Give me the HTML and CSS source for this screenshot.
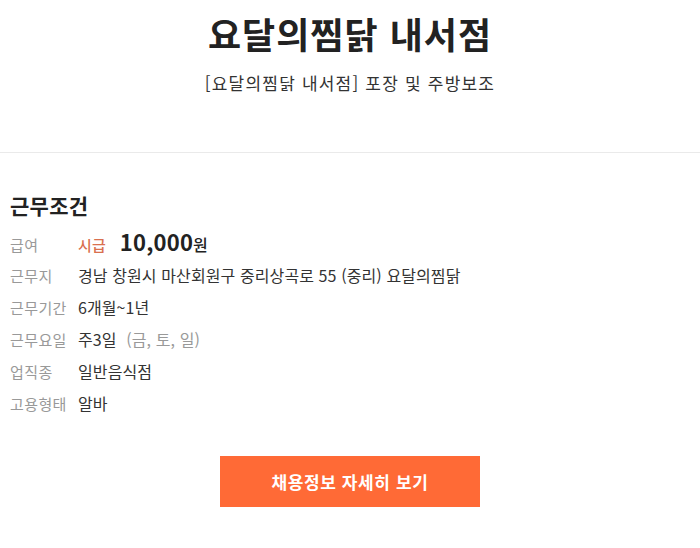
FILE: index.html
```html
<!DOCTYPE html>
<html lang="ko">
<head>
<meta charset="utf-8">
<link rel="stylesheet" href="styles.css">
</head>
<body>
<header class="head">
  <h1 class="title">요달의찜닭 내서점</h1>
  <p class="sub">[요달의찜닭 내서점] 포장 및 주방보조</p>
</header>
<section class="cond">
  <h2 class="cond-title">근무조건</h2>
  <dl class="rows">
    <div class="row row-pay"><dt>급여</dt><dd><span class="pay-type">시급</span><strong class="pay">10,000</strong><span class="won">원</span></dd></div>
    <div class="row"><dt>근무지</dt><dd>경남 창원시 마산회원구 중리상곡로 55 (중리) 요달의찜닭</dd></div>
    <div class="row"><dt>근무기간</dt><dd>6개월~1년</dd></div>
    <div class="row"><dt>근무요일</dt><dd>주3일 <span class="muted">(금, 토, 일)</span></dd></div>
    <div class="row"><dt>업직종</dt><dd>일반음식점</dd></div>
    <div class="row"><dt>고용형태</dt><dd>알바</dd></div>
  </dl>
  <div class="btn-wrap"><a class="btn">채용정보 자세히 보기</a></div>
</section>
</body>
</html>
```
FILE: styles.css
```css
html, body { margin: 0; padding: 0; background: #fff; }
body { font-family: "Noto Sans CJK KR", "Noto Sans", sans-serif; color: #333; }
.head { text-align: center; padding-top: 8px; box-sizing: border-box; height: 153px; border-bottom: 1px solid #eaeaea; }
.title { margin: 0; font-size: 36px; font-weight: 700; color: #222; line-height: 50px; letter-spacing: 1px; }
.sub { margin: 13px 0 0; font-size: 17px; color: #333; line-height: 24px; letter-spacing: 1.2px; }
.cond { padding: 38px 10px 0; }
.cond-title { margin: 0 0 6px; font-size: 21px; font-weight: 700; color: #222; line-height: 28px; letter-spacing: 0.3px; }
.rows { margin: 0; }
.row { display: flex; align-items: baseline; height: 32px; }
.row-pay { height: 38px; }
.row dt { width: 68px; font-size: 15px; color: #999; letter-spacing: 0.4px; }
.row dd { margin: 0; font-size: 16px; color: #333; letter-spacing: 0.1px; }
.pay-type { color: #d9704f; font-weight: 500; margin-right: 14px; font-size: 15px; }
.pay { font-size: 22px; font-weight: 700; color: #222; letter-spacing: 0.2px; }
.won { font-weight: 500; color: #222; font-size: 16px; }
.muted { color: #999; margin-left: 5px; }
.btn-wrap { display: flex; justify-content: center; margin-top: 33px; }
.btn { display: flex; align-items: center; justify-content: center; width: 260px; height: 51px; background: #ff6a36; color: #fff; font-size: 17px; font-weight: 700; letter-spacing: 0.6px; }
```
